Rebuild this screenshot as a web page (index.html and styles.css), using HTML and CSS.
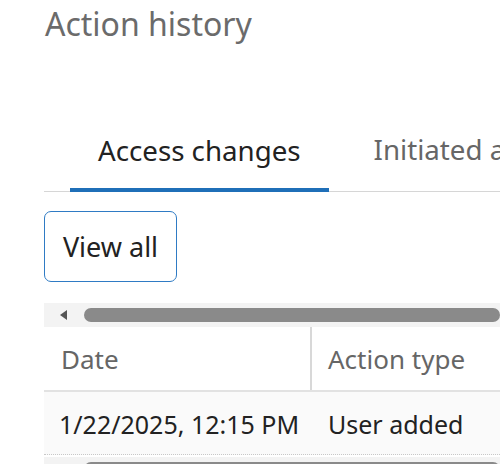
FILE: index.html
```html
<!DOCTYPE html>
<html>
<head>
<meta charset="utf-8">
<link rel="stylesheet" href="styles.css">
</head>
<body>
<div class="page">
  <h1 class="title">Action history</h1>
  <div class="tabs">
    <div class="tab active">Access changes</div>
    <div class="tab">Initiated actions</div>
  </div>
  <button class="btn">View all</button>
  <div class="scroll">
    <span class="arrow"></span>
    <span class="thumb"></span>
  </div>
  <div class="table">
    <div class="row head">
      <div class="cell c1">Date</div>
      <div class="cell c2">Action type</div>
    </div>
    <div class="row body">
      <div class="cell c1">1/22/2025, 12:15 PM</div>
      <div class="cell c2">User added</div>
    </div>
  </div>
  <div class="scroll bottom">
    <span class="arrow"></span>
    <span class="thumb"></span>
  </div>
</div>
</body>
</html>
```
FILE: styles.css
```css
html, body {
  margin: 0;
  padding: 0;
  background: #fff;
  overflow: hidden;
}
body {
  width: 500px;
  height: 464px;
  font-family: "Noto Sans", "Open Sans", sans-serif;
}
.page {
  padding-left: 44px;
  white-space: nowrap;
  overflow: hidden;
  height: 464px;
}
.title {
  margin: 0;
  padding-top: 3px;
  padding-left: 1px;
  font-weight: 400;
  font-size: 32px;
  line-height: 42px;
  color: #6b6b6b;
}
.tabs {
  display: flex;
  gap: 17px;
  margin-top: 82px;
  height: 64px;
  border-bottom: 1px solid #d6d6d6;
}
.tab {
  font-size: 27.7px;
  color: #666;
  padding: 4px 28px 0;
  line-height: 36px;
}
.tab.active {
  color: #222;
  border-bottom: 4px solid #1f6fb8;
  margin-left: 26px;
  box-sizing: border-box;
  align-self: flex-end;
  margin-bottom: -1px;
  height: 61px;
  padding-top: 1px;
}
.btn {
  display: block;
  margin-top: 19px;
  height: 71px;
  width: 133px;
  border: 1.5px solid #2f7bc4;
  border-radius: 7px;
  background: #fff;
  font-family: "Noto Sans", "Open Sans", sans-serif;
  font-size: 27px;
  color: #222;
  padding: 0;
}
.scroll {
  margin-top: 21px;
  height: 24px;
  background: #f3f3f3;
  display: flex;
  align-items: center;
}
.arrow {
  width: 0;
  height: 0;
  border-top: 5px solid transparent;
  border-bottom: 5px solid transparent;
  border-right: 7px solid #555;
  margin-left: 16px;
}
.thumb {
  flex: 1;
  height: 14px;
  border-radius: 7px;
  background: #8a8a8a;
  margin-left: 17px;
}
.table {
  display: flex;
  flex-direction: column;
}
.row {
  display: flex;
}
.row.head {
  height: 63px;
  border-bottom: 2px solid #e2e2e2;
}
.row.body {
  height: 62px;
  background: #fafafa;
  border-bottom: 1px dotted #c8c8c8;
}
.cell {
  display: flex;
  align-items: center;
  box-sizing: border-box;
}
.c1 {
  width: 268px;
}
.c2 {
  padding-left: 16px;
}
.head .cell {
  color: #666;
  font-size: 26px;
}
.head .c1 {
  padding-left: 17px;
  border-right: 2px solid #d8d8d8;
}
.body .cell {
  color: #222;
  font-size: 25px;
  padding-top: 1px;
}
.body .c1 {
  padding-left: 15px;
}
.scroll.bottom {
  margin-top: 2px;
}
```
